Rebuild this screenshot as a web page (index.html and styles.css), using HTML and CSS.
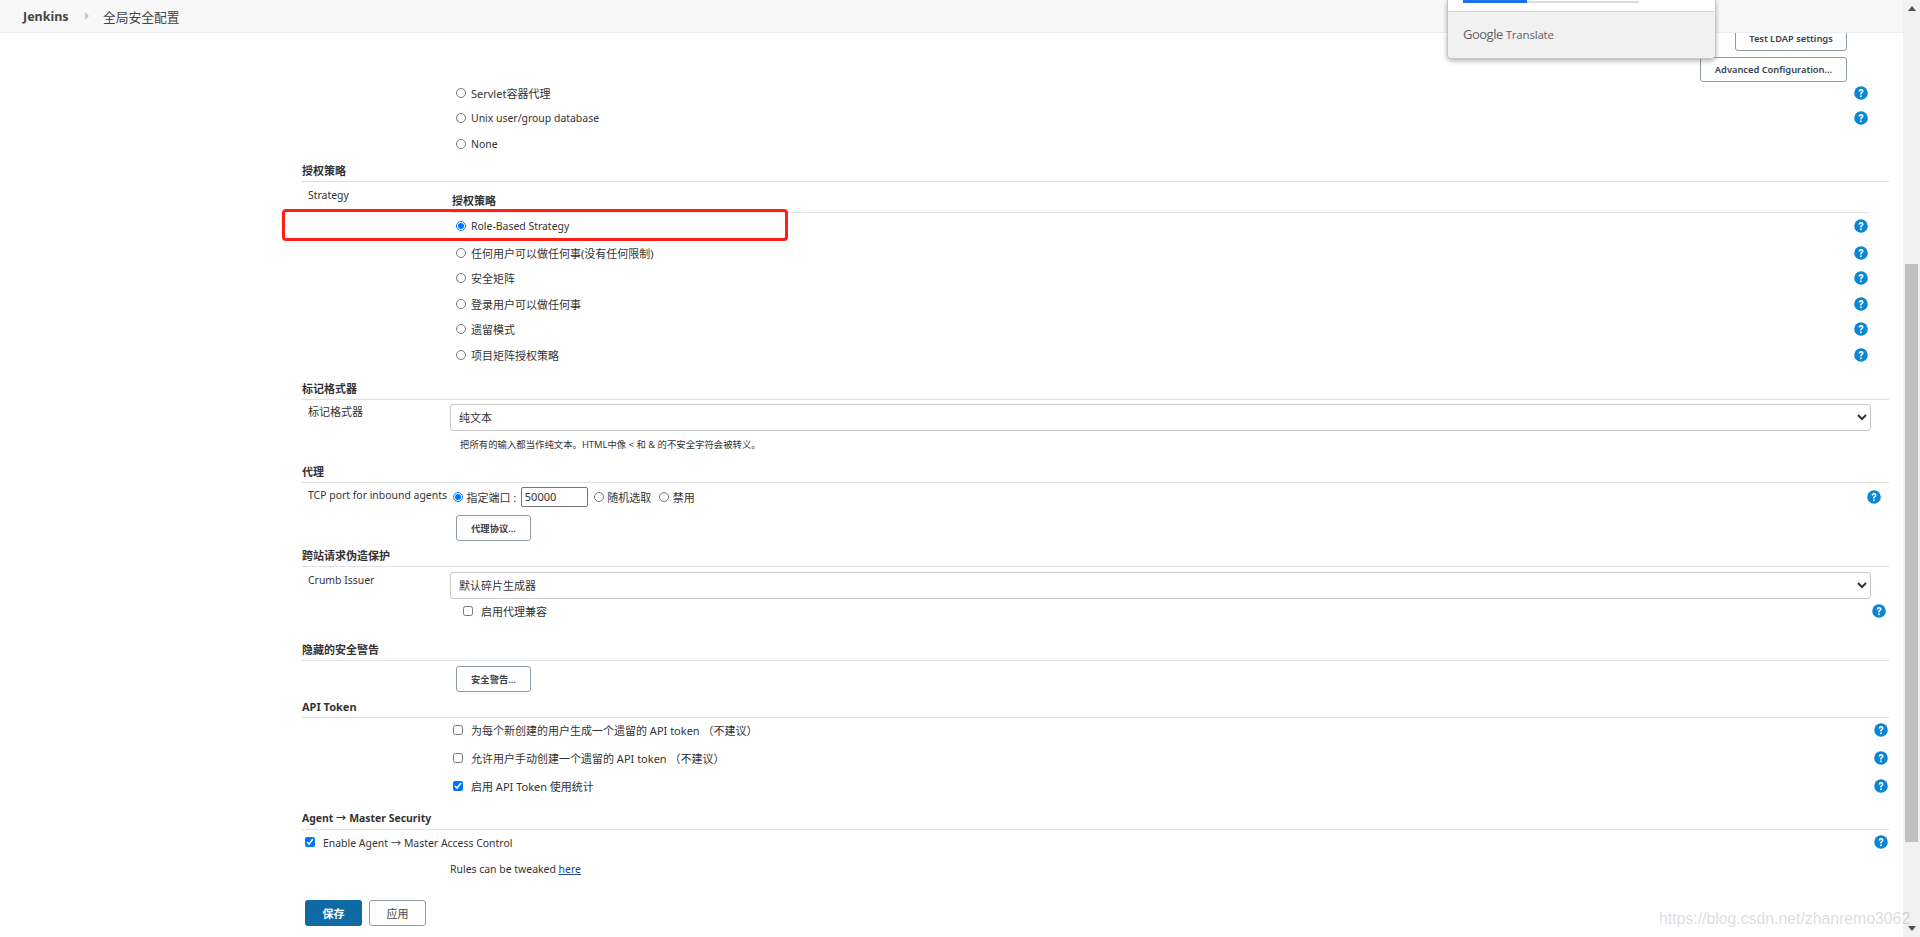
FILE: index.html
```html
<!DOCTYPE html>
<html lang="zh-CN">
<head>
<meta charset="utf-8">
<title>全局安全配置 [Jenkins]</title>
<link rel="stylesheet" href="styles.css">
</head>
<body>
<div class="viewport">
  <div class="page">
    <header class="crumbs">
      <a class="crumb-root">Jenkins</a>
      <svg class="crumb-arrow" width="5" height="8" viewBox="0 0 5 8"><path d="M0 0l4 4-4 4z" fill="#c4c8ca"/></svg>
      <a class="crumb-page">全局安全配置</a>
    </header>

    <div class="translate-pop">
      <div class="tp-top"><span class="tp-bar"></span><span class="tp-track"></span></div>
      <div class="tp-foot"><span class="tp-google">Google</span><span class="tp-word">Translate</span></div>
    </div>

    <main class="form">
      <div class="ldap-actions">
        <button class="btn btn-ldap" type="button">Test LDAP settings</button>
        <button class="btn btn-adv" type="button">Advanced Configuration...</button>
      </div>

      <div class="main-col main-col-top">
        <label class="opt"><span class="ctl"><input type="radio" name="realm"></span><span>Servlet容器代理</span><svg class="help" viewBox="0 0 14 14"><use href="#q"/></svg></label>
        <label class="opt"><span class="ctl"><input type="radio" name="realm"></span><span class="lat">Unix user/group database</span><svg class="help" viewBox="0 0 14 14"><use href="#q"/></svg></label>
        <label class="opt"><span class="ctl"><input type="radio" name="realm"></span><span class="lat">None</span></label>
      </div>

      <h2 class="sec sec-auth">授权策略</h2>
      <div class="two-col">
        <div class="label lat">Strategy</div>
        <div class="main-col">
          <h3 class="sub">授权策略</h3>
          <label class="opt opt-first"><span class="ctl"><input type="radio" name="auth" checked></span><span class="lat">Role-Based Strategy</span><svg class="help" viewBox="0 0 14 14"><use href="#q"/></svg></label>
          <label class="opt"><span class="ctl"><input type="radio" name="auth"></span><span>任何用户可以做任何事(没有任何限制)</span><svg class="help" viewBox="0 0 14 14"><use href="#q"/></svg></label>
          <label class="opt"><span class="ctl"><input type="radio" name="auth"></span><span>安全矩阵</span><svg class="help" viewBox="0 0 14 14"><use href="#q"/></svg></label>
          <label class="opt"><span class="ctl"><input type="radio" name="auth"></span><span>登录用户可以做任何事</span><svg class="help" viewBox="0 0 14 14"><use href="#q"/></svg></label>
          <label class="opt"><span class="ctl"><input type="radio" name="auth"></span><span>遗留模式</span><svg class="help" viewBox="0 0 14 14"><use href="#q"/></svg></label>
          <label class="opt"><span class="ctl"><input type="radio" name="auth"></span><span>项目矩阵授权策略</span><svg class="help" viewBox="0 0 14 14"><use href="#q"/></svg></label>
        </div>
      </div>

      <h2 class="sec sec-markup">标记格式器</h2>
      <div class="two-col">
        <div class="label label-field">标记格式器</div>
        <div class="field-col">
          <select class="sel sel-markup"><option>纯文本</option></select>
          <p class="note">把所有的输入都当作纯文本。HTML中像 &lt; 和 &amp; 的不安全字符会被转义。</p>
        </div>
      </div>

      <h2 class="sec sec-proxy">代理</h2>
      <div class="two-col">
        <div class="label label-tcp lat">TCP port for inbound agents</div>
        <div class="main-col main-wide">
          <div class="tcp">
            <input class="tcp-radio" type="radio" name="tcp" checked><span>指定端口 :</span>
            <input class="port" type="text" value="50000">
            <input class="tcp-radio tcp-random" type="radio" name="tcp"><span>随机选取</span>
            <input class="tcp-radio tcp-off" type="radio" name="tcp"><span>禁用</span>
            <svg class="help help-tcp" viewBox="0 0 14 14"><use href="#q"/></svg>
          </div>
          <button class="btn btn-small btn-proto" type="button">代理协议...</button>
        </div>
      </div>

      <h2 class="sec sec-csrf">跨站请求伪造保护</h2>
      <div class="two-col">
        <div class="label label-crumb lat">Crumb Issuer</div>
        <div class="field-col field-wide">
          <select class="sel sel-crumb"><option>默认碎片生成器</option></select>
          <label class="proxy-compat"><input type="checkbox"><span>启用代理兼容</span><svg class="help help-crumb" viewBox="0 0 14 14"><use href="#q"/></svg></label>
        </div>
      </div>

      <h2 class="sec sec-hidden">隐藏的安全警告</h2>
      <div class="indent"><button class="btn btn-small btn-warn" type="button">安全警告...</button></div>

      <h2 class="sec sec-api">API Token</h2>
      <div class="indent api-rows">
        <label class="chk"><input type="checkbox"><span>为每个新创建的用户生成一个遗留的 API token （不建议）</span><svg class="help" viewBox="0 0 14 14"><use href="#q"/></svg></label>
        <label class="chk"><input type="checkbox"><span>允许用户手动创建一个遗留的 API token （不建议）</span><svg class="help" viewBox="0 0 14 14"><use href="#q"/></svg></label>
        <label class="chk"><input type="checkbox" checked><span>启用 API Token 使用统计</span><svg class="help" viewBox="0 0 14 14"><use href="#q"/></svg></label>
      </div>

      <h2 class="sec sec-agent lat">Agent → Master Security</h2>
      <label class="agent"><input type="checkbox" checked><span class="lat">Enable Agent → Master Access Control</span><svg class="help" viewBox="0 0 14 14"><use href="#q"/></svg></label>
      <p class="rules lat">Rules can be tweaked <a href="#" class="rules-link">here</a></p>

      <div class="actions">
        <button class="btn-save" type="button">保存</button>
        <button class="btn btn-apply" type="button">应用</button>
      </div>
    </main>

    <div class="redbox"></div>
  </div>

  <div class="scrollbar">
    <span class="sb-up"></span>
    <div class="sb-track"><div class="sb-thumb"></div></div>
    <span class="sb-down"></span>
  </div>

  <div class="watermark">https://blog.csdn.net/zhanremo3062</div>
</div>

<svg class="defs" width="0" height="0">
  <defs>
    <g id="q">
      <circle cx="7" cy="7" r="6.8" fill="#0b86d6"/>
      <path d="M4.6 5.4c0-1.5 1-2.4 2.5-2.4s2.4.9 2.4 2.1c0 1-.5 1.5-1.2 2-.6.4-.8.7-.8 1.3v.2H6.1v-.4c0-.9.3-1.4 1-1.9.6-.4.8-.7.8-1.1 0-.5-.3-.8-.8-.8-.6 0-.9.4-.9 1z" fill="#fff"/>
      <rect x="6.1" y="9.5" width="1.6" height="1.6" fill="#fff"/>
    </g>
  </defs>
</svg>
</body>
</html>
```
FILE: styles.css
```css
* { box-sizing: border-box; }
html, body { margin: 0; padding: 0; height: 100%; overflow: hidden; background: #fff; }
body, button, input, select {
  font-family: "Noto Sans", "Noto Sans CJK SC", sans-serif;
  font-size: 11px;
  color: #333;
}
.defs { position: absolute; }
.viewport { position: relative; display: flex; width: 1920px; height: 937px; }
.page { position: relative; width: 1903px; height: 937px; overflow: hidden; }
.lat { font-size: 10.45px; }

/* header */
.crumbs {
  position: absolute; left: 0; top: 0; width: 100%; height: 33px;
  display: flex; align-items: center; padding-left: 23px;
  background: #f8f8f8; border-bottom: 1px solid #e9eef1; z-index: 2;
}
.crumb-root { font-size: 12.5px; font-weight: 700; color: #444; width: 62px; }
.crumb-arrow { margin-right: 13px; }
.crumb-page { font-size: 12.75px; color: #444; }

/* translate popup */
.translate-pop {
  position: absolute; left: 1447px; top: 0; width: 269px; height: 59px; z-index: 3;
  background: #f1f1f1; border: 1px solid #c4c6c8; border-top: 0;
  border-radius: 0 0 5px 5px; box-shadow: 0 2px 5px rgba(0,0,0,.3);
  display: flex; flex-direction: column;
}
.tp-top { height: 12px; background: #fff; border-bottom: 1px solid #d5d7d9; padding-left: 15px; display: flex; align-items: flex-start; }
.tp-bar { width: 64px; height: 3px; background: #1a73e8; }
.tp-track { width: 112px; height: 2px; margin-top: 1px; background: #dadce0; }
.tp-foot { flex: 1; display: flex; align-items: center; padding: 0 0 2px 15px; gap: 3px; font-family: "Open Sans", sans-serif; color: #5f6368; }
.tp-google { font-size: 13px; letter-spacing: -.5px; }
.tp-word { font-size: 11.5px; letter-spacing: -.2px; }

/* form layout */
.form { margin-left: 302px; width: 1587px; padding-top: 26px; }
.ldap-actions { display: flex; flex-direction: column; align-items: flex-end; gap: 6px; padding-right: 42px; }
.btn {
  display: flex; align-items: center; justify-content: center; padding: 0;
  height: 25px; background: #fff; border: 1px solid #8f9ca4; border-radius: 3px;
  font-size: 9.3px; font-weight: 600; color: #39424e;
}
.btn-ldap { width: 112px; }
.btn-adv { width: 147px; }
.btn-small { width: 75px; height: 26px; }

.main-col { flex: none; width: 1417px; }
.main-col-top { margin-left: 150px; }
.main-wide { width: 1437px; }
.opt { display: flex; align-items: center; height: 21px; margin-bottom: 4.5px; }
.opt-first { margin-top: 2.5px; margin-bottom: 6px; }
.ctl { width: 19px; display: flex; padding-left: 4px; }
input[type=radio], input[type=checkbox] { margin: 0; width: 10px; height: 10px; flex: none; }
.help { width: 14px; height: 14px; margin-left: auto; margin-right: 1px; flex: none; }

.sec {
  height: 22px; margin: 0; border-bottom: 1px solid #dfe1e3;
  font-size: 11px; font-weight: 700; line-height: 21px; color: #333;
}
.sec.lat { font-size: 10.45px; }
.sec-auth { margin-top: 5.5px; }
.sec-markup { margin-top: 8px; }
.sec-proxy { margin-top: 8px; }
.sec-csrf { margin-top: 4px; }
.sec-hidden { margin-top: 19px; }
.sec-api { margin-top: 4px; }
.sec-agent { margin-top: 11px; }

.two-col { display: flex; }
.label { width: 150px; flex: none; padding: 5px 0 0 6px; line-height: 16px; }
.label-field { padding-top: 4px; }
.label-tcp { padding-top: 4px; white-space: nowrap; }
.label-crumb { padding-top: 5px; }
.sub {
  margin: 0; padding: 11px 0 3px; line-height: 16px; height: 31px;
  border-bottom: 1px solid #dfe1e3; font-size: 11px; font-weight: 700;
}

.field-col { margin-left: -2px; padding-top: 4px; width: 1421px; }
.field-wide { padding-top: 5px; }
.sel { display: block; width: 100%; height: 27px; padding: 0 4px; border: 1px solid #c9c9c9; border-radius: 3px; background: #fff; }
.note { margin: 6px 0 0 10px; line-height: 16px; font-size: 9.4px; height: 16px; }

.tcp { display: flex; align-items: center; height: 20px; margin-top: 4px; white-space: nowrap; }
.tcp > span { margin-left: 3.5px; }
.tcp input.tcp-radio { margin-left: 1px; }
.port { width: 67px; height: 20px; margin-left: 4.5px; padding: 0 3px; border: 1px solid #767676; border-radius: 2px; background: #fff; }
.tcp input.tcp-random { margin-left: 6px; }
.tcp input.tcp-off { margin-left: 8px; }
.help-tcp { margin-right: 8px; }
.btn-proto { margin: 8px 0 0 4px; }

.proxy-compat { display: flex; align-items: center; height: 17px; margin-top: 4px; }
.proxy-compat input { margin-left: 13px; }
.proxy-compat span { margin-left: 8px; }
.help-crumb { margin-right: -15px; margin-left: auto; }

.indent { padding-left: 154px; }
.btn-warn { margin-top: 5px; }
.api-rows { padding-left: 151px; padding-top: 2px; }
.chk { display: flex; align-items: center; height: 21px; margin-bottom: 7px; }
.chk:last-child { margin-bottom: 0; }
.chk span { margin-left: 8px; }

.agent { display: flex; align-items: center; height: 21px; margin-top: 2px; padding-left: 3px; }
.agent span { margin-left: 8px; }
.rules { margin: 8px 0 0 148px; line-height: 16px; }
.rules-link { color: #204a87; }

.actions { display: flex; gap: 7px; margin: 23px 0 0 3px; }
.btn-save {
  width: 57px; height: 26px; padding: 0; border: 0; border-radius: 3px;
  background: #0d6aa2; color: #fff; font-weight: 700; font-size: 11px;
}
.btn-apply { width: 57px; height: 26px; font-weight: 400; font-size: 11px; color: #444; }

/* overlays */
.redbox {
  position: absolute; left: 282px; top: 209px; width: 506px; height: 32px;
  border: 3px solid #ff1f14; border-radius: 4px; z-index: 1; pointer-events: none;
}
.watermark {
  position: absolute; left: 1659px; top: 909px; font-family: "Liberation Sans", sans-serif;
  font-size: 15.8px; line-height: 20px; color: rgba(120,120,120,.27); white-space: nowrap; z-index: 4;
}

/* scrollbar */
.scrollbar { width: 17px; height: 937px; background: #f1f1f1; display: flex; flex-direction: column; align-items: center; }
.sb-up, .sb-down { flex: none; width: 0; height: 0; border-left: 4px solid transparent; border-right: 4px solid transparent; }
.sb-up { margin: 6px 0 0; border-bottom: 5px solid #505050; }
.sb-down { margin: 0 0 6px; border-top: 5px solid #505050; }
.sb-track { flex: 1; width: 100%; padding: 253px 2px 0; }
.sb-thumb { height: 578px; background: #c1c1c1; }
```
